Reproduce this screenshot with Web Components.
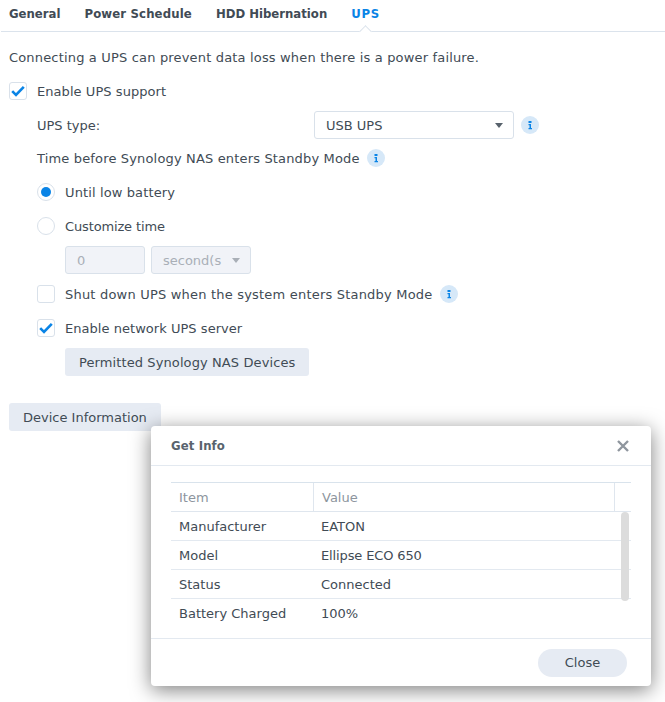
<!DOCTYPE html>
<html>
<head>
<meta charset="utf-8">
<title>UPS</title>
<style>
  html, body { margin: 0; height: 100%; background: #fff; }
  body {
    position: relative;
    width: 665px;
    height: 702px;
    overflow: hidden;
    font: 13px/21px "DejaVu Sans", Verdana, sans-serif;
    color: #414b55;
  }
</style>
</head>
<body>
<ups-page></ups-page>

<script>
const CHECK = `<svg width="18" height="18" viewBox="0 0 18 18"><path d="M3.2 9.2 7 13l7.8-8.2" fill="none" stroke="#0a84e6" stroke-width="2.6"/></svg>`;
const BOLD = `font-family: "DejaVu Sans Condensed", "DejaVu Sans", sans-serif; font-weight: bold;`;

class TabBar extends HTMLElement {
  constructor() {
    super();
    this.attachShadow({ mode: 'open' }).innerHTML = `
      <style>
        :host { display: flex; gap: 24px; height: 31px; margin-left: 1px; padding-left: 8px;
                border-bottom: 1px solid #dbe3ec; position: relative; ${BOLD} line-height: 27px; }
      </style>
      <slot></slot>`;
  }
}

class TabItem extends HTMLElement {
  constructor() {
    super();
    this.attachShadow({ mode: 'open' }).innerHTML = `
      <style>
        :host { display: block; position: relative; }
        :host([active]) { color: #0a84e6; }
        i { display: none; position: absolute; left: 10px; top: 27px; width: 8px; height: 8px; background: #fff;
            border: solid #dbe3ec; border-width: 1px 0 0 1px; transform: rotate(45deg); }
        :host([active]) i { display: block; }
      </style>
      <slot></slot><i></i>`;
  }
}

class FormRow extends HTMLElement {
  constructor() {
    super();
    this.attachShadow({ mode: 'open' }).innerHTML = `
      <style>
        :host { display: flex; align-items: center; gap: 8px; height: 28px; white-space: nowrap; }
        :host([indent="1"]) { padding-left: 28px; }
        :host([indent="2"]) { padding-left: 56px; }
      </style>
      <slot></slot>`;
  }
}

class CheckBox extends HTMLElement {
  constructor() {
    super();
    this.attachShadow({ mode: 'open' }).innerHTML = `
      <style>
        :host { display: flex; align-items: center; gap: 10px; }
        span { display: block; box-sizing: border-box; width: 18px; height: 18px; border: 1px solid #d9e1ea;
               border-radius: 3px; background: #fff; position: relative; }
        svg { position: absolute; left: -1px; top: -1px; }
      </style>
      <span>${this.hasAttribute('checked') ? CHECK : ''}</span><slot></slot>`;
  }
}

class RadioButton extends HTMLElement {
  constructor() {
    super();
    this.attachShadow({ mode: 'open' }).innerHTML = `
      <style>
        :host { display: flex; align-items: center; gap: 10px; }
        span { display: flex; align-items: center; justify-content: center; box-sizing: border-box;
               width: 18px; height: 18px; border: 1px solid #d9e1ea; border-radius: 50%; background: #fff; }
        b { display: none; width: 10px; height: 10px; border-radius: 50%; background: #0a84e6; }
        :host([checked]) b { display: block; }
      </style>
      <span><b></b></span><slot></slot>`;
  }
}

class InfoIcon extends HTMLElement {
  constructor() {
    super();
    this.attachShadow({ mode: 'open' }).innerHTML = `
      <style>:host { display: block; width: 18px; height: 18px; } svg { display: block; }</style>
      <svg width="18" height="18" viewBox="0 0 18 18">
        <circle cx="9" cy="9" r="9" fill="#d6e8f8"/>
        <path d="M7.5 5h3v2h-3zM7.5 8h2.500v4h1v1.200h-3.500V12h1V9.200h-1z" fill="#0a84e6"/>
      </svg>`;
  }
}

class SelectBox extends HTMLElement {
  constructor() {
    super();
    this.attachShadow({ mode: 'open' }).innerHTML = `
      <style>
        :host { display: flex; align-items: center; justify-content: space-between; box-sizing: border-box;
                height: 28px; padding: 0 10px 0 11px; border: 1px solid #d9e1ea; border-radius: 3px; background: #fff; }
        :host([disabled]) { background: #f1f3f8; color: #a9afb7; }
        i { width: 0; height: 0; border: 4px solid transparent; border-top: 5px solid #58626c; border-bottom: 0; }
        :host([disabled]) i { border-top-color: #a9afb7; }
      </style>
      <slot></slot><i></i>`;
  }
}

class TextField extends HTMLElement {
  constructor() {
    super();
    this.attachShadow({ mode: 'open' }).innerHTML = `
      <style>
        :host { display: flex; align-items: center; box-sizing: border-box; height: 28px; padding: 0 11px;
                border: 1px solid #d9e1ea; border-radius: 3px; background: #f1f3f8; color: #a9afb7; }
      </style>
      <slot></slot>`;
  }
}

class PlainButton extends HTMLElement {
  constructor() {
    super();
    this.attachShadow({ mode: 'open' }).innerHTML = `
      <style>
        :host { display: inline-flex; align-items: center; justify-content: center; box-sizing: border-box;
                height: 28px; padding: 0 14px; border-radius: 3px; background: #e6ebf3; white-space: nowrap; }
        :host([round]) { border-radius: 14px; width: 89px; padding: 0; }
      </style>
      <slot></slot>`;
  }
}

class InfoGrid extends HTMLElement {
  constructor() {
    super();
    this.attachShadow({ mode: 'open' }).innerHTML = `
      <style>
        :host { display: block; position: relative; width: 460px; }
        .row { display: grid; grid-template-columns: 142px 301px 17px; height: 28px; line-height: 29px;
               border-bottom: 1px solid #e3e9f0; }
        .row > div { padding-left: 8px; white-space: nowrap; }
        .head { border-top: 1px solid #d9e3ec; color: #8d959e; border-bottom-color: #dfe6ee; }
        .head > div + div { border-left: 1px solid #dfe6ee; }
        .last { border-bottom: 0; }
        .tight { letter-spacing: -.13px; }
        .bar { position: absolute; left: 450px; top: 30px; width: 8px; height: 89px; border-radius: 4px; background: #dcdcdc; }
      </style>
      <div class="row head"><div>Item</div><div>Value</div><div></div></div>
      ${[['Manufacturer', 'EATON'], ['Model', 'Ellipse ECO 650', 'tight'], ['Status', 'Connected'], ['Battery Charged', '100%']]
        .map(([a, b, c], i) => `<div class="row${i === 3 ? ' last' : ''}"><div>${a}</div><div class="${c || ''}">${b}</div><div></div></div>`).join('')}
      <div class="bar"></div>`;
  }
}

class InfoDialog extends HTMLElement {
  constructor() {
    super();
    this.attachShadow({ mode: 'open' }).innerHTML = `
      <style>
        :host { position: absolute; left: 151px; top: 426px; width: 500px; height: 260px; display: flex; flex-direction: column;
                background: #fff; border-radius: 4px; box-shadow: 0 4px 20px rgba(0,0,0,.5); }
        header { display: flex; align-items: center; justify-content: space-between; box-sizing: border-box; height: 40px;
                 padding: 0 22px 0 20px; border-bottom: 1px solid #e3e9f0; ${BOLD} letter-spacing: .12px; color: #59636d; }
        main { flex: 1; padding: 16px 20px 0; }
        footer { display: flex; justify-content: flex-end; align-items: center; box-sizing: border-box; height: 48px;
                 padding: 0 24px 0 0; border-top: 1px solid #e3e9f0; }
        svg { display: block; }
      </style>
      <header><span>Get Info</span>
        <svg width="12" height="12" viewBox="0 0 12 12"><path d="M1 1l10 10M11 1 1 11" stroke="#8f969e" stroke-width="2.400"/></svg>
      </header>
      <main><slot></slot></main>
      <footer><slot name="foot"></slot></footer>`;
  }
}

class UpsPage extends HTMLElement {
  constructor() {
    super();
    this.attachShadow({ mode: 'open' }).innerHTML = `
      <style>
        :host { display: block; }
        .form { display: flex; flex-direction: column; gap: 6px; padding: 11px 9px 0; }
        .standby { margin-top: -1px; gap: 7px; }
        .types { display: grid; grid-template-columns: 277px 200px 18px; align-items: center; }
        .types info-icon { margin-left: 7px; }
        .spaced { margin-top: 21px; }
      </style>
      <tab-bar>
        <tab-item>General</tab-item>
        <tab-item style="letter-spacing:.14px">Power Schedule</tab-item>
        <tab-item>HDD Hibernation</tab-item>
        <tab-item active style="letter-spacing:.7px">UPS</tab-item>
      </tab-bar>
      <div class="form">
        <form-row style="letter-spacing:.17px">Connecting a UPS can prevent data loss when there is a power failure.</form-row>
        <form-row style="letter-spacing:.06px"><check-box checked>Enable UPS support</check-box></form-row>
        <form-row indent="1"><div class="types"><span>UPS type:</span><select-box>USB UPS</select-box><info-icon></info-icon></div></form-row>
        <form-row indent="1" class="standby" style="letter-spacing:.16px">Time before Synology NAS enters Standby Mode <info-icon></info-icon></form-row>
        <form-row indent="1" style="letter-spacing:.12px"><radio-button checked>Until low battery</radio-button></form-row>
        <form-row indent="1" style="letter-spacing:-.14px"><radio-button>Customize time</radio-button></form-row>
        <form-row indent="2" style="gap:6px"><text-field style="width:80px">0</text-field><select-box disabled style="width:100px">second(s</select-box></form-row>
        <form-row indent="1" style="letter-spacing:.2px"><check-box>Shut down UPS when the system enters Standby Mode</check-box><info-icon></info-icon></form-row>
        <form-row indent="1" style="letter-spacing:.04px"><check-box checked>Enable network UPS server</check-box></form-row>
        <form-row indent="2" style="letter-spacing:.1px"><plain-button>Permitted Synology NAS Devices</plain-button></form-row>
        <form-row class="spaced"><plain-button>Device Information</plain-button></form-row>
      </div>
      <info-dialog>
        <info-grid></info-grid>
        <plain-button slot="foot" round>Close</plain-button>
      </info-dialog>`;
  }
}

customElements.define('tab-bar', TabBar);
customElements.define('tab-item', TabItem);
customElements.define('form-row', FormRow);
customElements.define('check-box', CheckBox);
customElements.define('radio-button', RadioButton);
customElements.define('info-icon', InfoIcon);
customElements.define('select-box', SelectBox);
customElements.define('text-field', TextField);
customElements.define('plain-button', PlainButton);
customElements.define('info-grid', InfoGrid);
customElements.define('info-dialog', InfoDialog);
customElements.define('ups-page', UpsPage);
</script>
</body>
</html>
